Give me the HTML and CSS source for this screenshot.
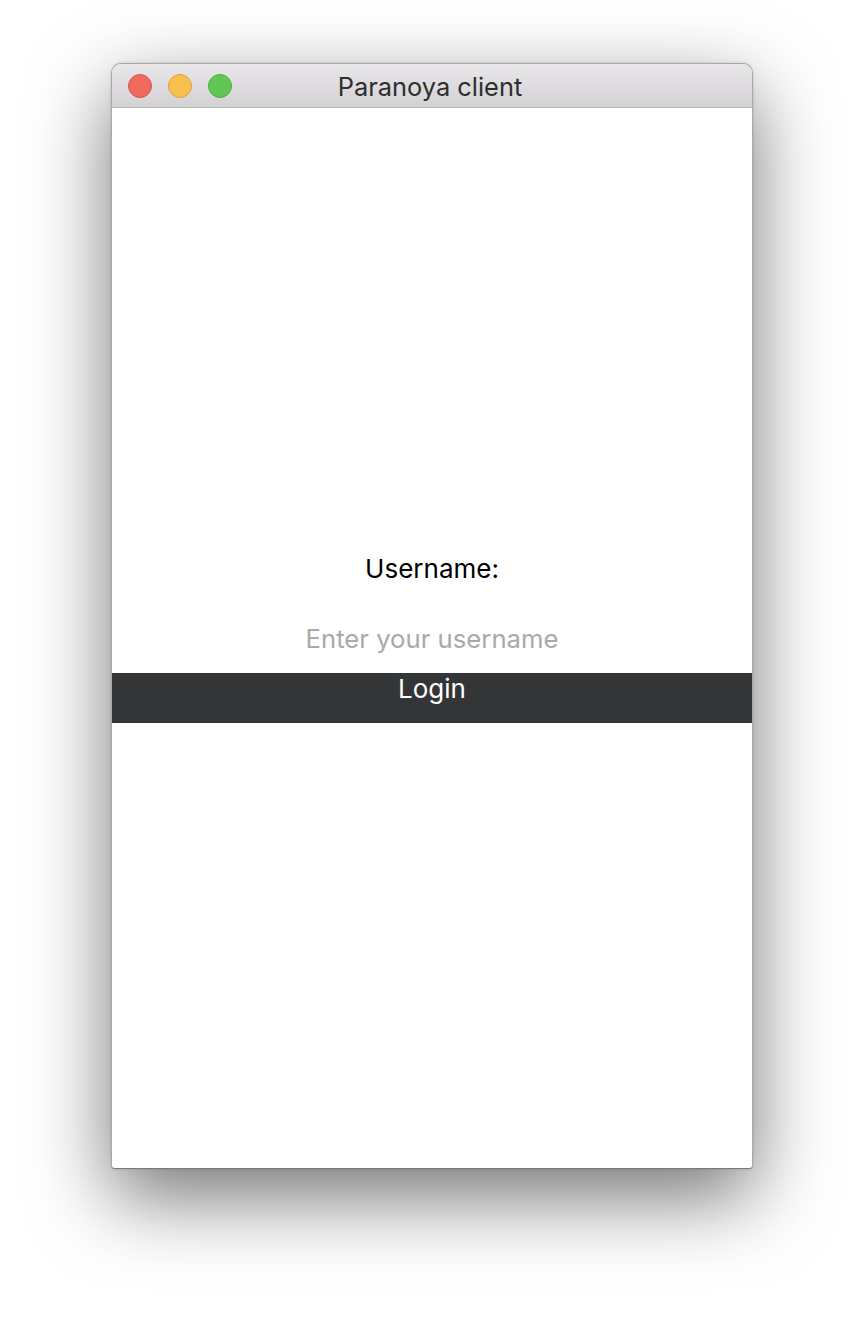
FILE: index.html
```html
<!DOCTYPE html>
<html>
<head>
<meta charset="utf-8">
<link rel="stylesheet" href="styles.css">
</head>
<body>
<div class="stage">
  <div class="window">
    <div class="titlebar">
      <div class="lights">
        <span class="light red"></span>
        <span class="light yellow"></span>
        <span class="light green"></span>
      </div>
      <div class="title">Paranoya client</div>
    </div>
    <div class="content">
      <div class="form">
        <div class="label">Username:</div>
        <input class="input" type="text" placeholder="Enter your username">
        <div class="login">Login</div>
      </div>
    </div>
  </div>
</div>
</body>
</html>
```

FILE: styles.css
```css
html, body {
  margin: 0;
  padding: 0;
  background: #ffffff;
}
.stage {
  box-sizing: border-box;
  min-height: 1328px;
  padding: 63px 0 0 111px;
}
.window {
  width: 642px;
  height: 1106px;
  box-sizing: border-box;
  border: 1px solid #a9a9a9;
  border-bottom-color: #7a7a7a;
  border-radius: 10px 10px 4px 4px;
  overflow: hidden;
  background: #ffffff;
  box-shadow: 0 28px 80px rgba(0,0,0,0.55), 0 0 3px rgba(0,0,0,0.15);
  display: flex;
  flex-direction: column;
  font-family: Inter, "Noto Sans", sans-serif;
}
.titlebar {
  height: 43px;
  flex: none;
  background: linear-gradient(#e9e7e9, #d3d1d3);
  border-bottom: 1px solid #b3b3b3;
  position: relative;
  display: flex;
  align-items: center;
  justify-content: center;
}
.lights {
  position: absolute;
  left: 16px;
  top: 10px;
  display: flex;
  gap: 16px;
}
.light {
  width: 22px;
  height: 22px;
  border-radius: 50%;
  display: block;
}
.red { background: #ee6a5f; border: 1px solid #d5554b; }
.yellow { background: #f6bf4f; border: 1px solid #dba43a; }
.green { background: #62c655; border: 1px solid #4fad43; }
.title {
  font-size: 25.4px;
  color: #2e2e2e;
  margin-left: -4px;
  margin-top: 2px;
}
.content {
  flex: 1;
  display: flex;
  flex-direction: column;
  justify-content: center;
}
.form {
  display: flex;
  flex-direction: column;
  align-items: stretch;
}
.label {
  text-align: center;
  font-size: 26px;
  line-height: 30px;
  height: 30px;
  color: #000;
}
.input {
  margin-top: 35px;
  height: 40px;
  border: none;
  outline: none;
  background: transparent;
  padding: 0;
  text-align: center;
  font-family: Inter, "Noto Sans", sans-serif;
  font-size: 25.7px;
  color: #000;
}
.input::placeholder {
  color: #a9a9a9;
}
.login {
  margin-top: 14px;
  height: 50px;
  background: #343536;
  color: #ffffff;
  text-align: center;
  font-size: 26px;
  line-height: 32px;
}
```
